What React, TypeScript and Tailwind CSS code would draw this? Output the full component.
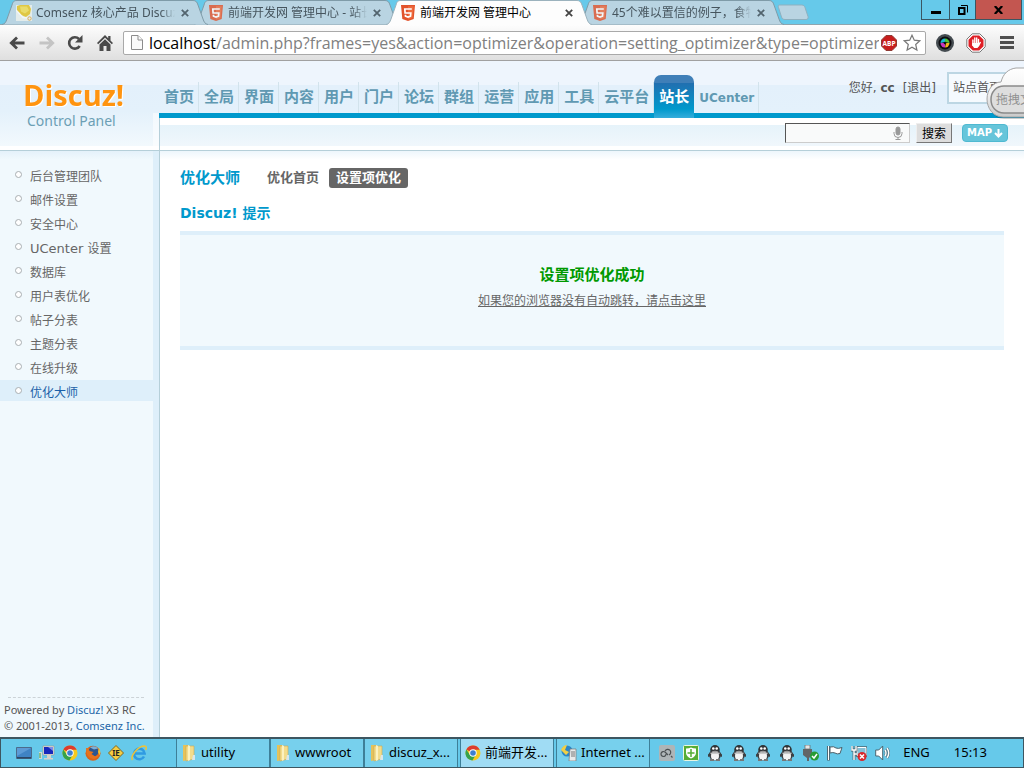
import type { ReactNode } from "react";

const tabs = [
  { title: "Comsenz 核心产品 Discuz!", icon: "comsenz", layer: "z-3", active: false },
  { title: "前端开发网 管理中心 - 站长", icon: "html5", layer: "z-2", active: false },
  { title: "前端开发网 管理中心", icon: "html5", layer: "z-4", active: true },
  { title: "45个难以置信的例子，食物", icon: "html5", layer: "z-1", active: false },
];

const navItems = [
  "首页", "全局", "界面", "内容", "用户", "门户", "论坛", "群组",
  "运营", "应用", "工具", "云平台", "站长", "UCenter",
];

const menuItems = [
  "后台管理团队", "邮件设置", "安全中心", "UCenter 设置", "数据库",
  "用户表优化", "帖子分表", "主题分表", "在线升级", "优化大师",
];

const uiFont = "font-['Noto_Sans','Noto_Sans_CJK_SC',sans-serif]";

function ComsenzIcon() {
  return (
    <svg width="16" height="16" viewBox="0 0 16 16" className="shrink-0">
      <rect width="16" height="16" fill="#eef3ee" />
      <path d="M1 1l3-1h9l2 4-1 5-4 3-5-2-4-4z" fill="#e9c51f" />
      <path d="M4 1.500h7l2 4-4 3-4-2z" fill="#f6df4e" />
      <path d="M0 5l7 7.500 5 .5" fill="none" stroke="#fff" strokeWidth="1.500" />
      <circle cx="13.500" cy="13.500" r="1.700" fill="none" stroke="#e2a33a" />
    </svg>
  );
}

function Html5Icon() {
  return (
    <svg width="16" height="16" viewBox="0 0 16 16" className="shrink-0">
      <path d="M1 0h14l-1.300 14L8 16l-5.700-2z" fill="#e2532c" />
      <path d="M8 1.200h5.700l-1.100 11.700L8 14.500z" fill="#ee6a3d" />
      <path d="M11.800 4H4.800l.3 4h5.700l-.3 3.200L8 12l-2.500-.8-.1-1.400" fill="none" stroke="#fff" strokeWidth="1.700" />
    </svg>
  );
}

function ChromeIcon() {
  return (
    <svg width="16" height="16" viewBox="0 0 16 16" className="shrink-0">
      <circle cx="8" cy="8" r="7.500" fill="#f4c91f" />
      <path d="M8 8L1.300 4.500A7.500 7.500 0 0 1 14.700 4.700L8 4.700z" fill="#dd3b2e" />
      <path d="M1.300 4.500A7.500 7.500 0 0 0 7.400 15.500L11 9.500 5 10z" fill="#35a24b" />
      <circle cx="8" cy="8" r="3.700" fill="#fff" />
      <circle cx="8" cy="8" r="2.800" fill="#3c7fd0" />
    </svg>
  );
}

function FolderIcon() {
  return (
    <svg width="16" height="18" viewBox="0 0 16 18" className="shrink-0">
      <path d="M2 1h5v15l-5 1z" fill="#e5c25b" />
      <path d="M5 2h8v13l-8 2z" fill="#f2dc8c" stroke="#c9a850" strokeWidth=".6" />
      <path d="M7 1l2 1v14l-2 1z" fill="#fbf1c0" />
      <path d="M12 11h2v5h-3z" fill="#d9e6ea" />
    </svg>
  );
}

function BrowserTab({ title, icon, layer, active }: (typeof tabs)[number]) {
  return (
    <div className={`relative -mr-3.5 flex h-[25px] w-[206px] shrink-0 items-center pr-[17px] pl-3.5 ${layer}`}>
      <svg className="absolute inset-0" width="206" height="25" viewBox="0 0 206 25">
        <path
          d="M0 24.500C3 24 4 22 5 19L10 5C11 1.500 12 .5 15 .5H191C194 .5 195 2 196 5L201 19C202 22 203 24 206 24.500"
          fill={active ? "#fdfdfd" : "#b9d4e2"}
          stroke={active ? "#9bb2bd" : "#7f9ba8"}
        />
        {active && <path d="M2 24.500H204" stroke="#fdfdfd" strokeWidth="1" />}
      </svg>
      <span className={`relative ${active ? "" : "opacity-80"}`}>{icon === "html5" ? <Html5Icon /> : <ComsenzIcon />}</span>
      <button
        className={`relative ml-1 min-w-0 flex-1 overflow-hidden text-left text-[12px] leading-5 whitespace-nowrap ${
          active ? "text-black" : "text-[#46555e] mask-r-from-90%"
        }`}
      >
        {title}
      </button>
      <button aria-label="关闭" className="relative ml-1 flex size-3 items-center justify-center">
        <svg width="8" height="8" viewBox="0 0 8 8" stroke={active ? "#444" : "#52646e"} strokeWidth="1.800">
          <path d="M.8.8l6.400 6.400M7.200.8L.8 7.200" />
        </svg>
      </button>
    </div>
  );
}

function TabStrip() {
  return (
    <div className="flex h-[25px] justify-between bg-[#66c9ea] pl-0.5 shadow-[inset_0_-1px_0_#8fa5ae]">
      <div className="flex min-w-0">
        {tabs.map((tab, i) => (
          <BrowserTab key={i} {...tab} />
        ))}
        <button aria-label="新标签页" className="ml-1.5 self-center">
          <svg width="34" height="17" viewBox="0 0 34 17">
            <path d="M3.500 1h22c2 0 3 1 3.500 2.500l3 9c.6 2-.5 3-2 3H9c-2 0-3-1-3.500-2.500l-3-9.500C2 2 2.500 1 3.500 1z" fill="#b9d4e2" stroke="#8fb0bf" />
          </svg>
        </button>
      </div>
      <div className="mr-0.5 flex h-5 border border-t-0 border-[#3a5663]">
        <button aria-label="最小化" className="flex w-7 items-center justify-center border-r border-[#3a5663]">
          <svg width="10" height="12" viewBox="0 0 10 12"><path d="M0 7h10v3H0z" /></svg>
        </button>
        <button aria-label="还原" className="flex w-[26px] items-center justify-center border-r border-[#3a5663]">
          <svg width="10" height="10" viewBox="0 0 10 10" fill="none" stroke="#000">
            <path d="M1 3h5.500v6H1z" strokeWidth="2" />
            <path d="M3 .5h6.500v7" />
          </svg>
        </button>
        <button aria-label="关闭窗口" className="flex w-[45px] items-center justify-center bg-[#c35650]">
          <svg width="9" height="8" viewBox="0 0 9 8" stroke="#000" strokeWidth="2.200"><path d="M.8 0l7.400 8M8.200 0L.8 8" /></svg>
        </button>
      </div>
    </div>
  );
}

function Toolbar() {
  return (
    <div className="flex h-9 items-center border-b border-[#a0a0a0] bg-linear-to-b from-[#fdfdfd] to-[#dfdfdf] pr-2.5 pl-[9px]">
      <button aria-label="后退" className="mr-3.5">
        <svg width="16" height="14" viewBox="0 0 16 14" fill="none" stroke="#4a4a4a" strokeWidth="2.800"><path d="M15.500 7H3M8 1.500L2.300 7 8 12.500" /></svg>
      </button>
      <button aria-label="前进" className="mr-3">
        <svg width="16" height="14" viewBox="0 0 16 14" fill="none" stroke="#c4c4c4" strokeWidth="2.800"><path d="M.5 7H13M8 1.500L13.700 7 8 12.500" /></svg>
      </button>
      <button aria-label="重新加载" className="mr-3.5">
        <svg width="16" height="16" viewBox="0 0 16 16">
          <path d="M12.700 11A5.700 5.700 0 1 1 12 4" fill="none" stroke="#4a4a4a" strokeWidth="2.600" />
          <path d="M15.500 0v7.500H8z" fill="#4a4a4a" />
        </svg>
      </button>
      <button aria-label="主页" className="mr-2.5">
        <svg width="16" height="16" viewBox="0 0 16 16" fill="#4a4a4a">
          <path d="M8 0L0 8l1.200 1.200L8 2.700l6.800 6.500L16 8l-2.500-2.500V1h-2.300v2.200z" />
          <path d="M2.500 9.500L8 4.300l5.500 5.200V16H9.500v-5h-3v5h-4z" />
        </svg>
      </button>
      <div className="flex h-6 min-w-0 flex-1 items-center rounded-xs border border-[#a9a9a9] bg-white pr-1 pl-[7px] font-['Open_Sans','Noto_Sans',sans-serif]">
        <svg width="12" height="15" viewBox="0 0 12 15" className="shrink-0" fill="#fafafa" stroke="#8c8c8c">
          <path d="M.5.5h6.500l4.500 4.500v9.500H.5z" />
          <path d="M7 .5V5h4.500" />
        </svg>
        <span className="ml-1.5 text-[16px] leading-5 text-black">localhost</span>
        <input
          aria-label="地址"
          className="min-w-0 flex-1 bg-transparent text-[16px] leading-5 text-[#808080] outline-none"
          defaultValue="/admin.php?frames=yes&action=optimizer&operation=setting_optimizer&type=optimizer"
        />
        <svg width="16" height="16" viewBox="0 0 16 16" className="ml-0.5 shrink-0">
          <path d="M5 .5h6L15.500 5v6L11 15.500H5L.5 11V5z" fill="#c71d1d" stroke="#8f3a33" />
          <text x="8" y="10.500" fontSize="6.500" fontWeight="bold" fill="#fff" textAnchor="middle">ABP</text>
        </svg>
        <svg width="18" height="18" viewBox="0 0 18 18" className="ml-1.5 shrink-0">
          <path d="M9 1.200l2.300 5 5.500.6-4.100 3.700 1.200 5.500L9 13.200 4.100 16l1.200-5.500-4.100-3.700 5.500-.6z" fill="#fff" stroke="#777" strokeWidth="1.200" />
        </svg>
      </div>
      <button aria-label="取色器" className="ml-2.5">
        <svg width="18" height="18" viewBox="0 0 18 18">
          <circle cx="9" cy="9" r="9" fill="#444b50" />
          <circle cx="9" cy="9" r="6.500" fill="#0c0c10" />
          <path d="M4.500 9A4.500 4.500 0 0 1 9 4.500V8z" fill="#19b8d8" />
          <path d="M9 4.500A4.500 4.500 0 0 1 13.500 9L9 8z" fill="#4fc53a" />
          <path d="M4.500 9A4.500 4.500 0 0 0 9 13.500V9z" fill="#c833c0" />
          <path d="M13.500 9A4.500 4.500 0 0 1 9 13.500L10 9z" fill="#f2b31f" />
          <circle cx="9" cy="9" r="1.300" fill="#111" />
        </svg>
      </button>
      <button aria-label="广告拦截" className="ml-3">
        <svg width="20" height="20" viewBox="0 0 20 20">
          <path d="M6.200.8h7.600l5.400 5.400v7.600l-5.400 5.400H6.200L.8 13.800V6.200z" fill="#fff" stroke="#777" />
          <path d="M6.800 2.500h6.400l4.300 4.300v6.400l-4.300 4.300H6.800l-4.300-4.300V6.800z" fill="#df1f26" />
          <path d="M6.900 7v5M8.800 5v6M10.700 5v6M12.500 6.500v6M14.300 9.500l-2 3.500" stroke="#fff" strokeWidth="1.400" strokeLinecap="round" />
          <path d="M6.200 10h7v2.500L11.500 15H8.200l-2-2.500z" fill="#fff" />
        </svg>
      </button>
      <button aria-label="菜单" className="ml-3.5">
        <svg width="14" height="13" viewBox="0 0 14 13" fill="#4f4f4f"><path d="M0 0h14v3H0zM0 5h14v3H0zM0 10h14v3H0z" /></svg>
      </button>
    </div>
  );
}

function NavItem({ label }: { label: string }) {
  if (label === "站长") {
    return (
      <a href="#" className="-mb-[5px] flex h-[43px] items-center rounded-t-[7px] bg-[linear-gradient(#3f7fb8_8px,#216fb0_8px,#0099cc_34px,#36addb)] px-[5px] pt-0.5 text-[15px] text-white">
        {label}
      </a>
    );
  }
  return (
    <a
      href="#"
      className={`flex h-[31px] items-center border-r border-[#d2e3ec] pr-1 pl-[5px] text-[#6099b2] ${
        label === "UCenter" ? "text-[12px]" : "text-[15px]"
      }`}
    >
      {label}
    </a>
  );
}

function Header() {
  return (
    <header className="relative flex h-[90px] border-b border-[#b5cfd9] bg-[linear-gradient(#eef5fd_24px,#e3f0fb_24px,#e4f1fb_50px,#f2f9fd_85px,#fff_85px)]">
      <div className="w-[153px] shrink-0 pt-4 pl-[23px]">
        <div className="font-['Open_Sans',sans-serif] text-[29px] leading-9 font-bold text-[#ff9410] drop-shadow-[1px_1px_0_#fff]">Discuz!</div>
        <div className={`pl-1 text-[14px] leading-4 text-[#6c9fb5] ${uiFont}`}>Control Panel</div>
      </div>
      <div className="mt-[52px] w-1.5 shrink-0 bg-white/50" />
      <div className="flex min-w-0 flex-1 flex-col">
        <div className="flex h-[52px] justify-between">
          <nav className="relative z-1 flex shrink-0 items-end pt-3 font-bold">
            {navItems.map((item) => (
              <NavItem key={item} label={item} />
            ))}
          </nav>
          <div className="flex shrink-0 items-start pt-[11px] text-[12px] text-[#555]">
            <p className="mr-[11px] flex gap-2 leading-8">
              <span>您好, <b>cc</b></span>
              <a href="#">[退出]</a>
            </p>
            <a href="#" className="w-[77px] overflow-hidden border-2 border-r-0 border-[#bcd6e3] bg-[#f5fafe] pl-1 leading-7 whitespace-nowrap">站点首页</a>
          </div>
        </div>
        <div className="h-[5px] shrink-0 bg-[#0099cc]" />
        <div className="flex h-8 items-center justify-end border-l border-[#b5cfd9] bg-[linear-gradient(#fff_7px,#e6f3fa_7px,#f0f7fc_28px,#fff_28px)] pr-4 pb-0.5">
          <label className="flex h-5 w-[125px] items-center border border-t-[#555] border-r-[#ccc] border-b-[#ccc] border-l-[#555] bg-[#f9fafa] pr-1.5">
            <input type="text" aria-label="搜索" className="min-w-0 flex-1 bg-transparent px-1 text-[12px] outline-none" />
            <svg width="10" height="14" viewBox="0 0 10 14" fill="none" stroke="#999">
              <rect x="3" y="1" width="4" height="8" rx="2" fill="#999" />
              <path d="M1 6v1.500a4 4 0 0 0 8 0V6M5 11.500V13M2.500 13.500h5" />
            </svg>
          </label>
          <button className="ml-1.5 h-5 w-9 border border-t-[#eee] border-r-[#777] border-b-[#777] border-l-[#eee] bg-[#ddd] pt-0.5 text-[12px] leading-none text-black">搜索</button>
          <button className="ml-2.5 flex h-[18px] w-[46px] items-center justify-center gap-0.5 rounded-[4px] border border-[#4fb9d1] bg-[#66c5da] text-[10px] leading-none font-bold text-white">
            MAP
            <svg width="9" height="9" viewBox="0 0 9 9" fill="none" stroke="#fff" strokeWidth="2"><path d="M4.500 0v7M1 4l3.500 3.500L8 4" /></svg>
          </button>
        </div>
      </div>
    </header>
  );
}

function Sidebar() {
  return (
    <aside className="flex w-40 shrink-0 flex-col justify-between border-r border-[#b5cfd9] bg-[linear-gradient(to_right,#f1f9fd_153px,#deeffa_153px)]">
      <ul className="w-[153px] bg-[linear-gradient(#e4f1fa,#f1f9fd_9px)] pt-[13px] text-[12px]">
        {menuItems.map((item) => {
          const current = item === "优化大师";
          const [latin, rest] = item.startsWith("UCenter") ? ["UCenter ", "设置"] : ["", item];
          return (
            <li key={item} className={`mb-[3px] flex h-[21px] items-center pl-[15px] ${current ? "bg-[#deeffa] text-[#1a5fa8]" : "text-[#666]"}`}>
              <span className="mr-2 size-[7px] rounded-full border border-[#a9afb2] bg-white" />
              <a href="#" className="pt-1 leading-4">
                {latin && <span className="text-[13px]">{latin}</span>}
                {rest}
              </a>
            </li>
          );
        })}
      </ul>
      <div className={`mr-[11px] pb-[3px] pl-1 text-[11px] leading-4 whitespace-nowrap text-[#555] ${uiFont}`}>
        <div className="mr-1 mb-1 ml-1 border-t border-dashed border-[#ccd3d7]" />
        <p>Powered by <a href="#" className="text-[#2366a8]">Discuz!</a> X3 RC</p>
        <p>© 2001-2013, <a href="#" className="text-[#2366a8]">Comsenz Inc.</a></p>
      </div>
    </aside>
  );
}

function Content() {
  return (
    <main className="min-w-0 flex-1 bg-[linear-gradient(#edf6fc,#fff_9px)] px-5 pt-[17px]">
      <div className="flex h-5 items-center font-bold">
        <h1 className="mr-[23px] text-[15px] text-[#0099cc]">优化大师</h1>
        <a href="#" className="mr-1 px-1 text-[13px] text-[#666]">优化首页</a>
        <a href="#" className="ml-0.5 rounded-[3px] bg-[#666] px-[7px] text-[13px] leading-5 text-white">设置项优化</a>
      </div>
      <h2 className="mt-[15px] text-[14px] leading-5 font-bold text-[#0099cc]">Discuz! 提示</h2>
      <section className="mt-2 flex h-[119px] flex-col items-center border-y-4 border-[#deeffa] bg-[#f1f9fd] pt-[30px]">
        <h4 className="text-[15px] leading-5 font-bold text-[#009900]">设置项优化成功</h4>
        <a href="#" className="mt-2 text-[12px] leading-4 text-[#666] underline">如果您的浏览器没有自动跳转，请点击这里</a>
      </section>
    </main>
  );
}

function CloudButton() {
  return (
    <button aria-label="上传" className="absolute top-[66px] right-0 h-[56px] w-10 overflow-hidden">
      <svg className="absolute inset-0" width="40" height="56" viewBox="0 0 40 56">
        <defs>
          <linearGradient id="cloud" x1="0" y1="0" x2="0" y2="1">
            <stop offset="0" stopColor="#ffffff" />
            <stop offset=".5" stopColor="#f2f2f2" />
            <stop offset="1" stopColor="#c9c9c9" />
          </linearGradient>
        </defs>
        <path d="M44 4H32C24 5 20 10 18 18 9 18 4 26 4 34s6 19 16 19h24z" fill="#000" opacity=".2" />
        <path d="M44 2H32C24 3 19 8 17 16 9 16 3 24 3 33s6 18 16 18h25z" fill="url(#cloud)" stroke="#a5a5a5" />
        <path d="M44 20H20C12 20 7 26 7 33.500S12 47 20 47h24z" fill="#dedede" stroke="#8a8a8a" strokeWidth="1.500" />
      </svg>
      <span className="absolute top-[26px] left-3 text-[12px] leading-4 whitespace-nowrap text-[#909090]">拖拽文件</span>
    </button>
  );
}

function TrayIcon({ label, children }: { label: string; children: ReactNode }) {
  return (
    <button aria-label={label} className="shrink-0">
      <svg width="16" height="16" viewBox="0 0 16 16" className="block">{children}</svg>
    </button>
  );
}

function Penguin() {
  return (
    <TrayIcon label="QQ">
      <ellipse cx="8" cy="10" rx="6" ry="5.500" fill="#3d4144" />
      <ellipse cx="8" cy="4.800" rx="4.800" ry="4.800" fill="#303437" />
      <path d="M1 9.500l3-3v4l-3 1.500zM15 9.500l-3-3v4l3 1.500z" fill="#3b3f42" />
      <ellipse cx="8" cy="11" rx="4" ry="4.200" fill="#f3f3f3" />
      <circle cx="6.300" cy="3.500" r="1.300" fill="#fff" />
      <circle cx="9.700" cy="3.500" r="1.300" fill="#fff" />
      <path d="M4.500 6.500Q8 5 11.500 6.500 8 9.500 4.500 6.500z" fill="#999" />
      <path d="M3.500 8.300h9" stroke="#c9c9c9" strokeWidth="1.500" />
      <path d="M3 15h4M9 15h4" stroke="#777" strokeWidth="1.800" />
    </TrayIcon>
  );
}

function QuickLaunch() {
  return (
    <div className="flex w-[175px] shrink-0 items-center gap-[7px] pl-[15px]">
      <TrayIcon label="显示桌面">
        <path d="M.5 2.500h15v11H.5z" fill="#3f83c4" stroke="#4b6c8c" />
        <path d="M1 3h14L1 11z" fill="#5c9bd6" />
        <path d="M1 12h14v1.500H1z" fill="#2b4765" />
      </TrayIcon>
      <TrayIcon label="远程桌面">
        <path d="M4 1h11v9H4z" fill="#e6e3d9" stroke="#999" strokeWidth=".7" />
        <path d="M5 2h9v7H5z" fill="#1728bb" />
        <path d="M9 2h5v4z" fill="#7c8de8" />
        <path d="M8 10h4v3h2v1.500H5V13h3z" fill="#d4d2cb" />
        <path d="M0 7h3v7H0z" fill="#d2d8d4" />
        <path d="M1 8v5" stroke="#33a244" />
      </TrayIcon>
      <button aria-label="Chrome"><ChromeIcon /></button>
      <TrayIcon label="Firefox">
        <circle cx="8" cy="8.300" r="7.500" fill="#d8641b" />
        <circle cx="8.500" cy="6.500" r="5" fill="#2b5690" />
        <path d="M5 2.500q5-3 8 1l-4 1z" fill="#7bb0d8" />
        <path d="M1 3q0 11 8 11 5-1 5.500-6-2 4-5 3l-3-2 2-2-4-1-1-3z" fill="#e6731c" />
        <path d="M14 2.500q2 4 .5 8L13 7z" fill="#f2c32f" />
      </TrayIcon>
      <TrayIcon label="IETester">
        <path d="M8 .5L15.500 8 8 15.500.5 8z" fill="#f6cd43" stroke="#80651d" />
        <text x="8" y="10.800" fontSize="8" fontWeight="bold" fill="#222" textAnchor="middle">IE</text>
      </TrayIcon>
      <TrayIcon label="Internet Explorer">
        <path d="M13 11.500a5.300 5.300 0 1 1 .6-3H4" fill="none" stroke="#2f9be2" strokeWidth="2.600" />
        <path d="M1.500 15C-1 11 7 1 13.500 1q3 .5 1 4" fill="none" stroke="#ecc23a" strokeWidth="1.500" />
      </TrayIcon>
    </div>
  );
}

function TaskButton({ label, active = false, children }: { label: string; active?: boolean; children: ReactNode }) {
  return (
    <button className={`flex h-full w-[94px] items-center gap-1 border-x border-[#3e7f98] pl-1 text-[13px] ${active ? "bg-[#a0dcf4]" : "bg-[#77d0ed]"}`}>
      {children}
      <span className="whitespace-nowrap">{label}</span>
    </button>
  );
}

function Taskbar() {
  return (
    <footer className="flex h-[31px] shrink-0 items-stretch border border-t-2 border-[#3d5661] bg-[#66c9ea] text-black">
      <QuickLaunch />
      <div className="flex min-w-0 shrink-0">
        <TaskButton label="utility"><FolderIcon /></TaskButton>
        <TaskButton label="wwwroot"><FolderIcon /></TaskButton>
        <TaskButton label="discuz_x..."><FolderIcon /></TaskButton>
        <div className="mx-0.5">
          <TaskButton label="前端开发..." active><ChromeIcon /></TaskButton>
        </div>
        <TaskButton label="Internet ...">
          <svg width="16" height="16" viewBox="0 0 16 16" className="shrink-0">
            <circle cx="6" cy="6" r="5.500" fill="#2c87c8" />
            <path d="M0 5q2-5 6-5L4 5l4 2-3 3z" fill="#f1cf46" />
            <path d="M9 4h6v12H8z" fill="#e8ebec" stroke="#777" strokeWidth=".7" />
            <path d="M10 7h4M10 9h4M10 11h4" stroke="#777" />
          </svg>
        </TaskButton>
      </div>
      <div className="ml-auto flex shrink-0 items-center gap-2 pr-9">
        <TrayIcon label="键盘">
          <rect width="16" height="16" rx="2" fill="#aeb5b7" />
          <path d="M7 9a2.500 2.500 0 1 1-1-2l3 3M6 6a3 3 0 1 1 4 4M12 11l1.500 1.500" fill="none" stroke="#4c5153" strokeWidth="1.200" />
        </TrayIcon>
        <TrayIcon label="安全卫士">
          <rect x=".5" y=".5" width="15" height="15" rx="1" fill="#56ad35" stroke="#e9f5e2" />
          <path d="M3 3.500q3 0 5-1 2 1 5 1v4q0 4-5 6-5-2-5-6z" fill="#fff" />
          <path d="M8 4v8M4.500 8h7" stroke="#56ad35" strokeWidth="1.500" />
        </TrayIcon>
        <Penguin />
        <Penguin />
        <Penguin />
        <Penguin />
        <TrayIcon label="安全删除硬件">
          <path d="M2 0h5v4H2z" fill="#e7e7e7" stroke="#666" strokeWidth=".7" />
          <path d="M0 4h9v6l-3 3v3H4v-3l-4-3z" fill="#626668" />
          <circle cx="11.500" cy="11" r="4.500" fill="#279b35" />
          <path d="M9 11l2 2 3-4" fill="none" stroke="#fff" strokeWidth="1.500" />
        </TrayIcon>
        <TrayIcon label="操作中心">
          <path d="M1.500 1v14.500" stroke="#4b5f69" strokeWidth="2.800" />
          <path d="M3 2q4-1 6 1 2 1 6-.5l-2 6q-3 1-5-.5-2-1-5 0z" fill="#fff" stroke="#4b5f69" />
          <path d="M1.500 1v14" stroke="#fff" />
        </TrayIcon>
        <TrayIcon label="网络">
          <path d="M6 2.500h9.500v8H6z" fill="#86bfd5" stroke="#4c6570" strokeWidth="2.400" />
          <path d="M6 2.500h9v8H6z" fill="#86bfd5" stroke="#fff" />
          <path d="M1 1v4h4V1M3 5v10M3 9h3" fill="none" stroke="#4c6570" strokeWidth="2.800" />
          <path d="M1 1v4h4V1M3 5v10M3 9h3" fill="none" stroke="#fff" strokeWidth="1.400" />
          <circle cx="11" cy="11.500" r="4.500" fill="#d9292c" />
          <path d="M9 9.500l4 4M13 9.500l-4 4" stroke="#fff" strokeWidth="1.500" />
        </TrayIcon>
        <TrayIcon label="音量">
          <path d="M.7 5h3l4-4v14l-4-4h-3z" fill="#fff" stroke="#4c6570" />
          <path d="M10 5q2 3 0 6M12 3q3.500 5 0 10" fill="none" stroke="#4c6570" strokeWidth="2.400" />
          <path d="M10 5q2 3 0 6M12 3q3.500 5 0 10" fill="none" stroke="#fff" strokeWidth="1.400" />
        </TrayIcon>
        <button className="ml-1 text-[13px]">ENG</button>
        <time className="ml-4 text-[13px]">15:13</time>
      </div>
    </footer>
  );
}

export default function App() {
  return (
    <div className={`relative flex h-screen flex-col overflow-hidden bg-white ${uiFont}`}>
      <TabStrip />
      <Toolbar />
      <div className="flex min-h-0 flex-1 flex-col font-['DejaVu_Sans','Noto_Sans_CJK_SC',sans-serif]">
        <Header />
        <div className="flex min-h-0 flex-1">
          <Sidebar />
          <Content />
        </div>
      </div>
      <Taskbar />
      <CloudButton />
    </div>
  );
}
